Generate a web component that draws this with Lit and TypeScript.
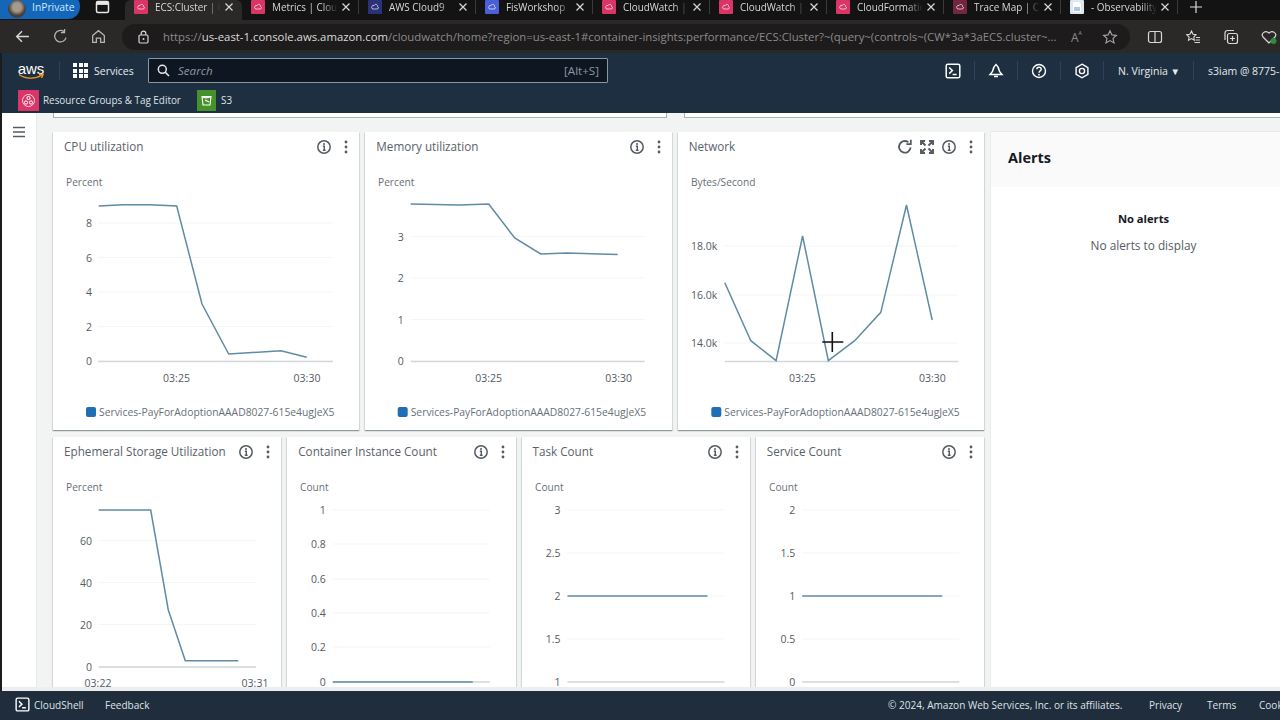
import { LitElement, html, css, svg } from "lit";
import { customElement } from "lit/decorators.js";

const FONT = `"Open Sans", "Noto Sans", sans-serif`;

interface Chart {
  title: string; unit: string; x0: number; y0: number; w: number; h: number;
  yLabels: [string, number][]; labelRight: number; axisX: [number, number]; axisY: number;
  xLabels: [string, number][]; xLabelY: number; line: [number, number][]; legend?: number; extra?: boolean; cross?: boolean;
}

const LEG = "Services-PayForAdoptionAAAD8027-615e4ugJeX5";

const row1: Chart[] = [
  { title: "CPU utilization", unit: "Percent", x0: 53, y0: 132, w: 307, h: 262,
    yLabels: [["8", 223], ["6", 257.5], ["4", 292], ["2", 326.5], ["0", 361]], labelRight: 92, axisX: [98, 333], axisY: 361.5,
    xLabels: [["03:25", 176.5], ["03:30", 307]], xLabelY: 378,
    line: [[98.7, 206], [123, 204.7], [150, 204.7], [176.7, 206], [202, 304], [228.7, 354], [281, 350.7], [306.7, 357.3]], legend: 86 },
  { title: "Memory utilization", unit: "Percent", x0: 365.3, y0: 132, w: 307, h: 262,
    yLabels: [["3", 236.5], ["2", 278], ["1", 319.5], ["0", 361]], labelRight: 404, axisX: [411, 645], axisY: 361.5,
    xLabels: [["03:25", 489], ["03:30", 619]], xLabelY: 378,
    line: [[411, 204], [460, 205], [489, 204], [515, 238], [541, 254], [567, 253], [618, 254.5]], legend: 398 },
  { title: "Network", unit: "Bytes/Second", x0: 677.7, y0: 132, w: 307, h: 262,
    yLabels: [["18.0k", 246], ["16.0k", 295], ["14.0k", 343]], labelRight: 717, axisX: [724.5, 958], axisY: 361.5,
    xLabels: [["03:25", 802], ["03:30", 932]], xLabelY: 378,
    line: [[724.5, 282.7], [750.5, 340.7], [775.8, 360.7], [802.3, 236], [828, 360.7], [854.4, 340.7], [880.5, 312.3], [906.2, 205], [931.9, 320]], legend: 711, extra: true, cross: true },
];

const row2: Chart[] = [
  { title: "Ephemeral Storage Utilization", unit: "Percent", x0: 53, y0: 437, w: 229, h: 230,
    yLabels: [["60", 540.5], ["40", 582.5], ["20", 624.5], ["0", 667]], labelRight: 92, axisX: [98.7, 256], axisY: 667,
    xLabels: [["03:22", 98], ["03:31", 255]], xLabelY: 683,
    line: [[98.7, 510], [150.7, 510], [168.3, 610], [185.3, 660.7], [238.3, 660.7]] },
  { title: "Container Instance Count", unit: "Count", x0: 287.25, y0: 437, w: 229, h: 230,
    yLabels: [["1", 510], ["0.8", 544], ["0.6", 579], ["0.4", 613], ["0.2", 647], ["0", 682]], labelRight: 326, axisX: [333, 490], axisY: 682,
    xLabels: [], xLabelY: 698,
    line: [[333, 682], [473, 682]] },
  { title: "Task Count", unit: "Count", x0: 521.5, y0: 437, w: 229, h: 230,
    yLabels: [["3", 510], ["2.5", 553], ["2", 596], ["1.5", 639], ["1", 682]], labelRight: 560, axisX: [567, 724], axisY: 682,
    xLabels: [], xLabelY: 698,
    line: [[567, 596], [707, 596]] },
  { title: "Service Count", unit: "Count", x0: 755.75, y0: 437, w: 229, h: 230,
    yLabels: [["2", 510], ["1.5", 553], ["1", 596], ["0.5", 639], ["0", 682]], labelRight: 795, axisX: [802, 959], axisY: 682,
    xLabels: [], xLabelY: 698,
    line: [[802, 596], [942, 596]] },
];

const tabs = [
  { t: "ECS:Cluster | CloudWatch", c: "#d93566", active: true },
  { t: "Metrics | CloudWatch", c: "#d93566" },
  { t: "AWS Cloud9", c: "#2a3378" },
  { t: "FisWorkshop", c: "#4a5fd8" },
  { t: "CloudWatch | CloudWatch", c: "#d93566" },
  { t: "CloudWatch | CloudWatch", c: "#d93566" },
  { t: "CloudFormation", c: "#d93566" },
  { t: "Trace Map | CloudWatch", c: "#74263f" },
  { t: "- Observability", c: "#dfe8f2", doc: true },
];

const info = html`<svg class="ic" viewBox="0 0 16 16"><circle cx="8" cy="8" r="6.2" fill="none" stroke="#545b64" stroke-width="1.5"/><circle cx="8" cy="5" r="1" fill="#545b64"/><path d="M6.8 7.3H8.3V11M6.8 11.2H9.6" fill="none" stroke="#545b64" stroke-width="1.4"/></svg>`;
const dots = html`<svg class="ic" viewBox="0 0 16 16"><circle cx="8" cy="3" r="1.4" fill="#545b64"/><circle cx="8" cy="8" r="1.4" fill="#545b64"/><circle cx="8" cy="13" r="1.4" fill="#545b64"/></svg>`;
const refresh = html`<svg class="ic" viewBox="0 0 16 16"><path d="M13.6 8.4A5.8 5.8 0 1 1 11.3 3.2" fill="none" stroke="#545b64" stroke-width="1.8"/><path d="M13.8 .8V5.2H9.4" fill="none" stroke="#545b64" stroke-width="1.8"/></svg>`;
const expand = html`<svg class="ic" viewBox="0 0 16 16"><path d="M2 6V2H6M10 2H14V6M14 10V14H10M6 14H2V10M2.5 2.5L6.5 6.5M13.5 2.5L9.5 6.5M13.5 13.5L9.5 9.5M2.5 13.5L6.5 9.5" fill="none" stroke="#545b64" stroke-width="1.9"/></svg>`;
const shell = html`<svg viewBox="0 0 16 16" width="15" height="15"><rect x="1.2" y="1.2" width="13.6" height="13.6" rx="1.6" fill="none" stroke="#fff" stroke-width="1.5"/><path d="M4.2 4.5L7.4 7.6L4.2 10.6M7.6 11.4H11.6" fill="none" stroke="#fff" stroke-width="1.5"/></svg>`;

function chartSvg(c: Chart) {
  const top = c.y0 + 36;
  const pts = c.line.map((p) => p.join(",")).join(" ");
  return html`<svg class="chart" width=${c.w} height=${c.h} viewBox="${c.x0} ${top} ${c.w} ${c.h}" preserveAspectRatio="xMinYMin">
    <text class="unit" x=${c.x0 + 13} y=${top + 18}>${c.unit}</text>
    ${c.yLabels.map(([l, y]) => svg`
      <line x1=${c.axisX[0]} x2=${c.axisX[1]} y1=${y} y2=${y} class="grid"/>
      <text class="tick" x=${c.labelRight} y=${y + 4} text-anchor="end">${l}</text>`)}
    <line x1=${c.axisX[0]} x2=${c.axisX[1]} y1=${c.axisY} y2=${c.axisY} class="axis"/>
    ${c.xLabels.map(([l, x]) => svg`<text class="tick" x=${x} y=${c.xLabelY + 4} text-anchor="middle">${l}</text>`)}
    <polyline points=${pts} class="series"/>
    ${c.legend ? svg`<rect x=${c.legend} y=${c.y0 + 275} width="10" height="10" rx="2" fill="#1f6fb5"/>
      <text class="legend" x=${c.legend + 13} y=${c.y0 + 284}>${LEG}</text>` : ""}
    ${c.cross ? svg`<path d="M822 342H843M832 332V352" stroke="#111" stroke-width="1.6" fill="none"/>` : ""}
  </svg>`;
}

@customElement("app-root")
export class AppRoot extends LitElement {
  static styles = css`
    :host { display: block; width: 1280px; height: 720px; overflow: hidden; font-family: "Open Sans", "Noto Sans", sans-serif; background: #1c1c1c; }
    .page { display: flex; flex-direction: column; height: 720px; }
    .strip { height: 20px; flex: none; background: #141313; display: flex; align-items: flex-start; overflow: hidden; }
    .priv { width: 80px; height: 25px; margin-top: -6px; background: #1467b8; border-radius: 0 12px 12px 0; display: flex; align-items: center; gap: 6px; flex: none; box-sizing: border-box; padding-left: 8px; color: #cfe6ff; font-size: 10.3px; }
    .ava { width: 18px; height: 18px; margin-top: 4px; border-radius: 50%; background: radial-gradient(circle at 50% 40%, #a59a8d 0 30%, #453f3a 60%); flex: none; }
    .ws { width: 45px; flex: none; display: flex; justify-content: flex-start; padding: 0 0 0 15px; box-sizing: border-box; height: 14px; }
    .tab { width: 117px; flex: none; height: 20px; box-sizing: border-box; display: flex; align-items: center; padding: 0 0 6px 9px; position: relative; color: #d8d8d8; font-size: 9.9px; }
    .tab::after { content: ""; position: absolute; right: 0; top: 0; height: 14px; width: 1px; background: #3a3a3a; }
    .tab.active { background: #2b2928; border-radius: 6px 6px 0 0; }
    .tab.active::after { display: none; }
    .fav { width: 14px; height: 14px; border-radius: 1px; flex: none; margin-right: 7px; display: flex; align-items: center; justify-content: center; }
    .ttl { width: 66px; overflow: hidden; white-space: nowrap; -webkit-mask-image: linear-gradient(90deg, #000 76%, transparent); mask-image: linear-gradient(90deg, #000 76%, transparent); flex: none; }
    .x { margin-left: 3px; width: 10px; height: 10px; flex: none; }
    .plus { margin-left: 11px; flex: none; }
    .toolbar { height: 33px; flex: none; background: #2b2928; display: flex; align-items: center; }
    .navbtns { width: 122px; flex: none; display: flex; padding-left: 14px; box-sizing: border-box; gap: 21px; }
    .navbtns svg { width: 17px; height: 17px; }
    .addr { width: 1008px; height: 26px; flex: none; background: #1d1b1b; border-radius: 13px; display: flex; align-items: center; padding-left: 15px; box-sizing: border-box; color: #8b8b8b; font-size: 11.35px; white-space: nowrap; }
    .addr b { font-weight: 400; color: #dcdcdc; }
    .lock { flex: none; margin-right: 13px; }
    .url { width: 896px; overflow: hidden; flex: none; }
    .aA { color: #8b8b8b; font-size: 12px; width: 31px; margin-left: 12px; flex: none; }
    .aA sup { font-size: 8px; }
    .star { flex: none; }
    .tools { display: flex; gap: 22px; padding-left: 17px; }
    .tools svg { width: 16px; height: 16px; flex: none; }
    .aws { flex: 1; min-height: 0; display: flex; flex-direction: column; border-left: 2px solid #1c1c1c; }
    .nav { height: 35px; flex: none; background: #1e2f41; display: flex; align-items: center; color: #e6e9ec; font-size: 10.5px; }
    .logo { width: 26px; margin-left: 16px; flex: none; color: #fff; display: flex; flex-direction: column; align-items: center; font: 400 15px/13px "Liberation Sans", sans-serif; }
    .logo svg { margin-top: -2px; }
    .sep { width: 1px; height: 19px; background: #2f4256; flex: none; }
    .logosep { margin-left: 15px; }
    .grid9 { display: grid; grid-template-columns: repeat(3, 4px); gap: 1.5px; margin-left: 13px; margin-right: 6px; flex: none; }
    .grid9 i { width: 4px; height: 4px; background: #fff; display: block; }
    .svc { width: 54px; flex: none; color: #e8ebee; }
    .search { width: 460px; height: 25px; flex: none; box-sizing: border-box; background: #0e1622; border: 1px solid #8a96a3; display: flex; align-items: center; padding: 0 8px; gap: 8px; color: #8b96a2; font-size: 11.6px; border-radius: 1px; }
    .search em { flex: 1; }
    .search svg { flex: none; }
    .navright { display: flex; align-items: center; margin-left: 324px; flex: none; white-space: nowrap; }
    .ni { width: 42px; flex: none; display: flex; justify-content: center; }
    .ni svg { width: 16px; height: 16px; }
    .nv { flex: none; margin-left: 14px; width: 75px; }
    .nv span { font-size: 9.5px; }
    .acct { margin-left: 14px; }
    .favbar { height: 25px; flex: none; background: #1e2f41; display: flex; align-items: center; color: #dfe3e7; font-size: 9.9px; padding-bottom: 1px; box-sizing: border-box; }
    .svcic { width: 21px; height: 21px; flex: none; display: flex; align-items: center; justify-content: center; }
    .rg { background: #d93566; margin-left: 16px; margin-right: 4px; }
    .rgt { width: 154px; flex: none; white-space: nowrap; }
    .s3 { background: #46912b; width: 19px; margin-right: 5px; }
    .main { flex: 1; min-height: 0; display: flex; overflow: hidden; background: #f2f3f3; }
    .side { width: 34px; flex: none; background: #fff; border-right: 1px solid #e6e8e9; display: flex; justify-content: center; padding-top: 13px; }
    .side svg { width: 14px; height: 12px; }
    .content { margin-left: 16px; flex: 1; min-width: 0; }
    .tops { display: flex; height: 5px; gap: 17px; margin-bottom: 14px; }
    .tops div { background: #fff; border: 1px solid #aab2b8; border-top: none; box-sizing: border-box; }
    .t1 { width: 614px; } .t2 { flex: 1; border-right: none !important; }
    .body { display: flex; gap: 7px; width: 1243px; }
    .col { width: 931px; flex: none; display: flex; flex-direction: column; gap: 7px; }
    .row { display: grid; gap: 6px; }
    .r3 { grid-template-columns: repeat(3, 1fr); }
    .r4 { grid-template-columns: repeat(4, 1fr); }
    .card { background: #fff; box-shadow: 0 1px 1px rgba(0, 28, 36, .3), 1px 1px 1px rgba(0, 28, 36, .08), -1px 1px 1px rgba(0, 28, 36, .08); overflow: hidden; min-width: 0; }
    .r3 .card { height: 298px; }
    .r4 .card { height: 270px; }
    .head { height: 36px; display: flex; align-items: flex-start; padding: 7px 5px 0 11px; box-sizing: border-box; }
    .title { flex: 1; font-size: 11.7px; line-height: 14px; color: #5a6169; white-space: nowrap; }
    .icons { display: flex; gap: 6px; }
    .ic { width: 16px; height: 16px; flex: none; display: block; }
    .chart { display: block; }
    .chart text { font-family: "Open Sans", "Noto Sans", sans-serif; }
    .unit { font-size: 10.2px; fill: #687078; }
    .tick { font-size: 10.5px; fill: #545b64; }
    .legend { font-size: 10.33px; fill: #687078; }
    .grid { stroke: #f4f5f5; stroke-width: 1; }
    .axis { stroke: #d3d7da; stroke-width: 1.4; }
    .series { fill: none; stroke: #5f8ba6; stroke-width: 1.5; }
    .alerts { width: 305px; flex: none; background: #fff; min-height: 600px; box-shadow: 0 0 1px rgba(0, 28, 36, .2); }
    .ah { height: 55px; background: #fafafa; display: flex; align-items: center; padding-left: 17px; font-size: 14.5px; font-weight: 700; color: #16191f; padding-bottom: 5px; box-sizing: border-box; }
    .ab { text-align: center; font-size: 11.8px; color: #545b64; padding-top: 24px; }
    .ab strong { display: block; color: #16191f; line-height: 16px; margin-bottom: 10px; font-weight: 700; font-size: 11.2px; }
    .band { height: 4px; flex: none; background: #eceeef; }
    .foot { height: 29px; flex: none; background: #1f2d3c; display: flex; align-items: center; color: #dfe3e7; font-size: 10.05px; white-space: nowrap; margin-left: -2px; padding-bottom: 2px; box-sizing: border-box; }
    .foot .cs { display: flex; align-items: center; gap: 4px; margin-left: 15px; width: 90px; flex: none; }
    .foot .fb { width: 783px; flex: none; }
    .foot .cr { width: 261px; flex: none; }
    .foot .pv { width: 58px; flex: none; }
    .foot .tm { width: 52px; flex: none; }
  `;

  card(c: Chart) {
    return html`<div class="card">
      <div class="head"><div class="title">${c.title}</div>
        <div class="icons">${c.extra ? html`${refresh}${expand}` : ""}${info}${dots}</div></div>
      ${chartSvg(c)}
    </div>`;
  }

  render() {
    const s = "#d8d8d8";
    return html`<div class="page">
      <div class="strip">
        <div class="priv"><div class="ava"></div>InPrivate</div>
        <div class="ws"><svg width="15" height="14" viewBox="0 0 15 14"><rect x="1.5" y="1.5" width="12" height="11" rx="1.5" fill="none" stroke="#e6e6e6" stroke-width="1.5"/><rect x="1.5" y="1.5" width="12" height="3.4" fill="#e6e6e6"/></svg></div>
        ${tabs.map((t) => html`<div class="tab ${t.active ? "active" : ""}">
          <div class="fav" style="background:${t.c}">${t.doc ? html`<svg width="10" height="12" viewBox="0 0 10 12"><path d="M1 1H7L9 3V11H1Z" fill="#fff"/><path d="M2 7H8M2 9H8" stroke="#5a8fd0"/></svg>` : html`<svg width="10" height="10" viewBox="0 0 10 10"><path d="M2 6.5C.8 5 2.5 3 4 3.5 5 1.5 8 2.5 7.5 4.5 9 5 8.6 7 7 7H3Z" fill="none" stroke="#fff" stroke-opacity=".75" stroke-width=".9"/></svg>`}</div>
          <div class="ttl">${t.t}</div>
          <svg class="x" viewBox="0 0 10 10"><path d="M1.5 1.5L8.5 8.5M8.5 1.5L1.5 8.5" stroke="#d8d8d8" stroke-width="1.2"/></svg>
        </div>`)}
        <svg class="plus" width="14" height="14" viewBox="0 0 14 14"><path d="M7 1V13M1 7H13" stroke="#ddd" stroke-width="1.2"/></svg>
      </div>
      <div class="toolbar">
        <div class="navbtns">
          <svg viewBox="0 0 16 16"><path d="M14 8H2.5M7.5 3L2.5 8L7.5 13" fill="none" stroke=${s} stroke-width="1.3"/></svg>
          <svg viewBox="0 0 16 16"><path d="M13.2 9A5.4 5.4 0 1 1 11.2 3.4M11.8 1V4.4H8.4" fill="none" stroke="#b5b5b5" stroke-width="1.2"/></svg>
          <svg viewBox="0 0 16 16"><path d="M2.5 7L8 2.5L13.5 7V13.5H10V9.5H6V13.5H2.5Z" fill="none" stroke="#b5b5b5" stroke-width="1.2"/></svg>
        </div>
        <div class="addr">
          <svg class="lock" width="13" height="14" viewBox="0 0 13 14"><rect x="2" y="5" width="9" height="8" rx="1.2" fill="none" stroke=${s} stroke-width="1.2"/><path d="M4.2 5V3.4A2.3 2.3 0 0 1 8.8 3.4V5" fill="none" stroke=${s} stroke-width="1.2"/><circle cx="6.5" cy="9" r="1" fill=${s}/></svg>
          <div class="url">https://<b>us-east-1.console.aws.amazon.com</b>/cloudwatch/home?region=us-east-1#container-insights:performance/ECS:Cluster?~(query~(controls~(CW*3a*3aECS.cluster~...</div>
          <div class="aA">A<sup>ᴬ</sup></div>
          <svg class="star" width="16" height="16" viewBox="0 0 16 16"><path d="M8 1.8L9.9 5.9L14.4 6.4L11 9.4L12 13.9L8 11.6L4 13.9L5 9.4L1.6 6.4L6.1 5.9Z" fill="none" stroke="#a8a8a8" stroke-width="1.1"/></svg>
        </div>
        <div class="tools">
          <svg viewBox="0 0 16 16"><rect x="1.5" y="2.5" width="13" height="11" rx="2" fill="none" stroke=${s} stroke-width="1.2"/><path d="M8 2.5V13.5" stroke=${s} stroke-width="1.2"/></svg>
          <svg viewBox="0 0 16 16"><path d="M6.5 2L8 5.3L11 5.7L8.8 8L9.3 11.2L6.5 9.6L3.5 11.2L4.1 8L1.8 5.7L5 5.3ZM11 8.5H15M10.5 11H15M9.5 13.5H15" fill="none" stroke=${s} stroke-width="1.1"/></svg>
          <svg viewBox="0 0 16 16"><rect x="4.5" y="4.5" width="10" height="10" rx="2" fill="none" stroke=${s} stroke-width="1.2"/><path d="M2 11V4A2.5 2.5 0 0 1 4.5 1.5H11M9.5 7V12M7 9.5H12" fill="none" stroke=${s} stroke-width="1.2"/></svg>
          <svg viewBox="0 0 16 16"><path d="M8 14L2 8C-.5 4.5 4.5 .5 8 4C11.5 .5 16.5 4.5 14 8Z" fill="none" stroke=${s} stroke-width="1.2"/><circle cx="12.5" cy="12" r="3" fill="#2e8b3a"/></svg>
        </div>
      </div>
      <div class="aws">
        <div class="nav">
          <div class="logo">aws<svg width="26" height="7" viewBox="0 0 26 7"><path d="M1 1.5C7 6 17 6.5 24 2M21 1.2L25 1.5L23.6 5" fill="none" stroke="#f29a1f" stroke-width="1.4"/></svg></div>
          <div class="sep logosep"></div>
          <div class="grid9">${Array.from({ length: 9 }, () => html`<i></i>`)}</div>
          <div class="svc">Services</div>
          <div class="search">
            <svg width="13" height="13" viewBox="0 0 13 13"><circle cx="5.3" cy="5.3" r="4" fill="none" stroke="#e8e8e8" stroke-width="1.5"/><path d="M8.3 8.3L12 12" stroke="#e8e8e8" stroke-width="1.6"/></svg>
            <em>Search</em><span>[Alt+S]</span>
          </div>
          <div class="navright">
            <div class="ni">${shell}</div><div class="sep"></div>
            <div class="ni"><svg viewBox="0 0 16 16"><path d="M8 1.5C5 4 5 7 4.5 8.5L2 11.5H14L11.5 8.5C11 7 11 4 8 1.5ZM6 13.5H10" fill="none" stroke="#fff" stroke-width="1.5"/></svg></div><div class="sep"></div>
            <div class="ni"><svg viewBox="0 0 16 16"><circle cx="8" cy="8" r="6.5" fill="none" stroke="#fff" stroke-width="1.4"/><path d="M5.8 6.2C5.8 3.6 10.2 3.6 10.2 6.2C10.2 8 8 7.8 8 9.8" fill="none" stroke="#fff" stroke-width="1.4"/><circle cx="8" cy="11.7" r=".9" fill="#fff"/></svg></div><div class="sep"></div>
            <div class="ni"><svg viewBox="0 0 16 16"><path d="M8 1.2L13.9 4.6V11.4L8 14.8L2.1 11.4V4.6Z" fill="none" stroke="#fff" stroke-width="1.4"/><circle cx="8" cy="8" r="2.6" fill="none" stroke="#fff" stroke-width="1.4"/></svg></div><div class="sep"></div>
            <div class="nv">N. Virginia <span>▼</span></div><div class="sep"></div>
            <div class="acct">s3iam @ 8775-</div>
          </div>
        </div>
        <div class="favbar">
          <div class="svcic rg"><svg width="15" height="15" viewBox="0 0 15 15"><circle cx="7.5" cy="7.5" r="6" fill="none" stroke="#fff" stroke-opacity=".8"/><circle cx="7.5" cy="5" r="1.6" fill="none" stroke="#fff"/><circle cx="5" cy="9.5" r="1.6" fill="none" stroke="#fff"/><circle cx="10" cy="9.5" r="1.6" fill="none" stroke="#fff"/></svg></div>
          <div class="rgt">Resource Groups &amp; Tag Editor</div>
          <div class="svcic s3"><svg width="13" height="13" viewBox="0 0 13 13"><path d="M2 2.5H11L10 11H3ZM2 2.5C4 4 8 4 11 2.5M5 6L9 8" fill="none" stroke="#fff" stroke-width="1.1"/></svg></div>
          <div>S3</div>
        </div>
        <div class="main">
          <div class="side"><svg viewBox="0 0 14 12"><path d="M1 1.5H13M1 6H13M1 10.5H13" stroke="#545b64" stroke-width="1.6"/></svg></div>
          <div class="content">
            <div class="tops"><div class="t1"></div><div class="t2"></div></div>
            <div class="body">
              <div class="col">
                <div class="row r3">${row1.map((c) => this.card(c))}</div>
                <div class="row r4">${row2.map((c) => this.card(c))}</div>
              </div>
              <div class="alerts">
                <div class="ah">Alerts</div>
                <div class="ab"><strong>No alerts</strong>No alerts to display</div>
              </div>
            </div>
          </div>
        </div>
        <div class="band"></div>
        <div class="foot">
          <div class="cs">${shell}<span>CloudShell</span></div>
          <div class="fb">Feedback</div>
          <div class="cr">© 2024, Amazon Web Services, Inc. or its affiliates.</div>
          <div class="pv">Privacy</div>
          <div class="tm">Terms</div>
          <div>Cookie preferences</div>
        </div>
      </div>
    </div>`;
  }
}
